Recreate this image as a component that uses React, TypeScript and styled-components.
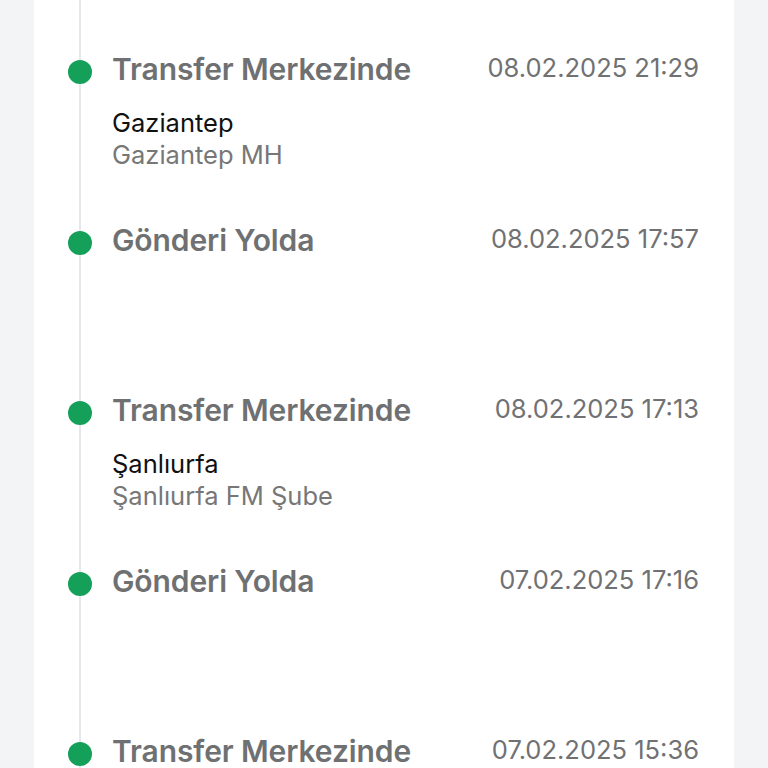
import React from "react";
import styled, { createGlobalStyle } from "styled-components";

const Global = createGlobalStyle`
  html, body {
    margin: 0;
    padding: 0;
    background: #f3f4f6;
    font-family: Inter, "Noto Sans", sans-serif;
  }
`;

const Page = styled.div`
  width: 768px;
  height: 768px;
  overflow: hidden;
  background: #f3f4f6;
  padding: 0 34px;
  box-sizing: border-box;
`;

const Card = styled.div`
  background: #ffffff;
  height: 100%;
  padding: 0 35px 0 34px;
  box-sizing: border-box;
`;

const List = styled.ul`
  position: relative;
  list-style: none;
  margin: 0;
  padding: 51px 0 0;

  &::before {
    content: "";
    position: absolute;
    top: 0;
    bottom: 0;
    left: 11px;
    width: 2px;
    background: #e5e7eb;
  }
`;

const Item = styled.li`
  position: relative;
  display: grid;
  grid-template-columns: 24px 1fr auto;
  column-gap: 20px;
  height: 170.5px;
  align-items: start;
`;

const Dot = styled.span`
  width: 24px;
  height: 24px;
  border-radius: 50%;
  background: #15a05a;
  margin-top: 9px;
`;

const Body = styled.div`
  display: flex;
  flex-direction: column;
`;

const Title = styled.div`
  font-size: 30px;
  line-height: 36px;
  font-weight: 600;
  color: #6f7072;
  letter-spacing: -0.1px;
`;

const Place = styled.div<{ $muted?: boolean }>`
  font-size: 25.5px;
  line-height: 32px;
  color: ${(p) => (p.$muted ? "#777777" : "#111111")};
  margin-top: ${(p) => (p.$muted ? "0" : "20px")};
`;

const Date = styled.div`
  font-size: 25.5px;
  line-height: 34px;
  color: #707173;
  text-align: right;
`;

type Step = { title: string; date: string; city?: string; branch?: string };

const steps: Step[] = [
  { title: "Transfer Merkezinde", date: "08.02.2025 21:29", city: "Gaziantep", branch: "Gaziantep MH" },
  { title: "Gönderi Yolda", date: "08.02.2025 17:57" },
  { title: "Transfer Merkezinde", date: "08.02.2025 17:13", city: "Şanlıurfa", branch: "Şanlıurfa FM Şube" },
  { title: "Gönderi Yolda", date: "07.02.2025 17:16" },
  { title: "Transfer Merkezinde", date: "07.02.2025 15:36" },
];

export default function App() {
  return (
    <>
      <Global />
      <Page>
        <Card>
          <List>
            {steps.map((s, i) => (
              <Item key={i}>
                <Dot />
                <Body>
                  <Title>{s.title}</Title>
                  {s.city && <Place>{s.city}</Place>}
                  {s.branch && <Place $muted>{s.branch}</Place>}
                </Body>
                <Date>{s.date}</Date>
              </Item>
            ))}
          </List>
        </Card>
      </Page>
    </>
  );
}
